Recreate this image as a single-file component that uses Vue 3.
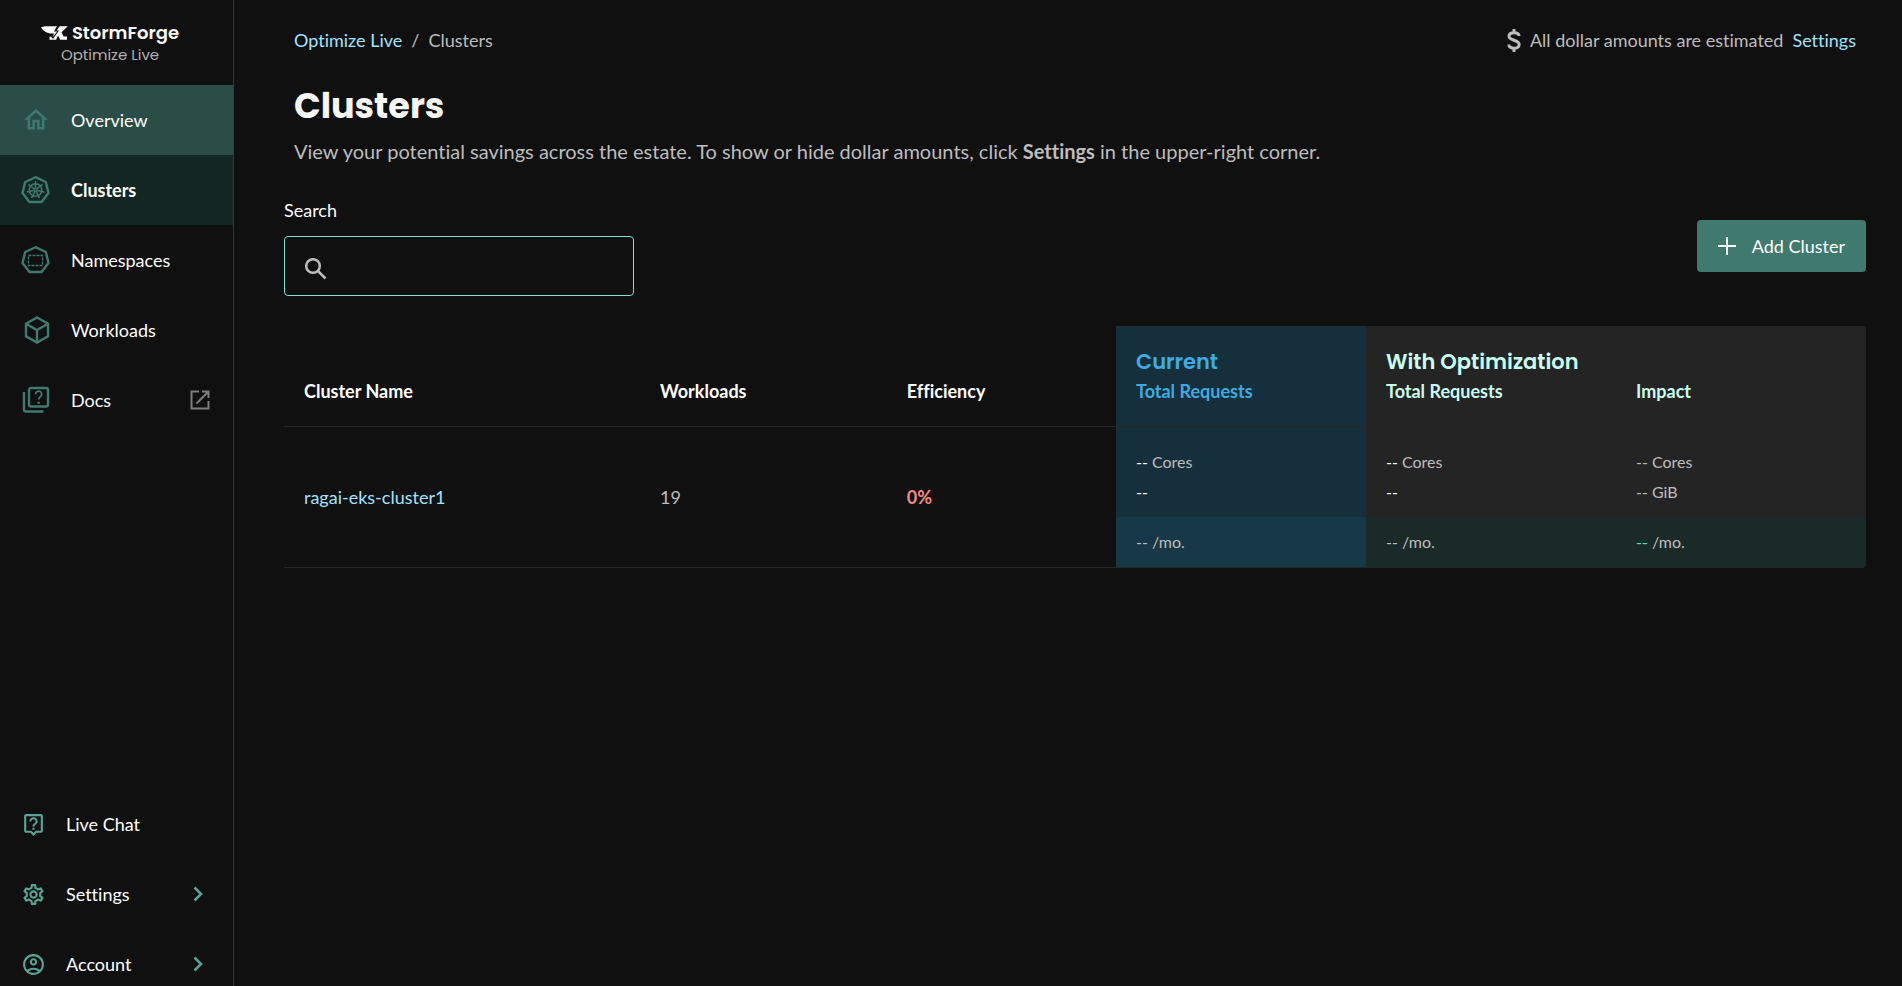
<script setup>
import { ref } from 'vue'

const search = ref('')

const navItems = [
  { label: 'Overview', icon: 'home', state: 'hovered' },
  { label: 'Clusters', icon: 'clusters', state: 'active' },
  { label: 'Namespaces', icon: 'namespaces', state: '' },
  { label: 'Workloads', icon: 'workloads', state: '' },
  { label: 'Docs', icon: 'docs', state: '', external: true },
]

const spokes = [0, 1, 2, 3, 4, 5, 6].map((i) => {
  const a = (i * 2 * Math.PI) / 7 - Math.PI / 2
  const dx = Math.cos(a)
  const dy = Math.sin(a)
  return { x1: 14.5 + 2 * dx, y1: 15 + 2 * dy, x2: 14.5 + 9 * dx, y2: 15 + 9 * dy }
})

const clusters = [{ name: 'ragai-eks-cluster1', workloads: 19, efficiency: '0%' }]
</script>

<template>
  <div class="app">
    <aside class="sidebar">
      <div class="brand">
        <div class="brand-name">
          <svg class="brand-mark" viewBox="0 0 27 14" aria-hidden="true">
            <path d="M0 1.200L4 .3H16L13 5.600H16.200L11.500 11.500L13 7.500H10.500C7 7.200 2.500 5.800 0 1.200z" />
            <path d="M18.600 .3H26.800L20.600 6.300L22.600 10.600H26V13.700H19.200L17 9.600L15.200 13.700H8.500V10.800H10.200L12 13L18 4.600H15.600z" />
          </svg>
          <span>StormForge</span>
        </div>
        <div class="brand-product">Optimize Live</div>
      </div>

      <nav class="nav" aria-label="Main">
        <a v-for="item in navItems" :key="item.label" href="#" class="nav-item" :class="item.state">
          <svg v-if="item.icon === 'home'" class="nav-icon" viewBox="0 0 30 30" aria-hidden="true">
            <path class="fill" d="M15 7.300l6 5.400V22h-2.400v-7.200h-7.200V22H9v-9.300l6-5.400M15 4L3 14.800h3.600v9.600h7.200v-7.200h2.400v7.200h7.200v-9.600H27L15 4z" />
          </svg>
          <svg v-else-if="item.icon === 'clusters'" class="nav-icon" viewBox="0 0 30 30" aria-hidden="true">
            <path class="line" d="M14.500 2.200L24.800 7L27.500 18L20.500 27H8.500L1.500 18L4.200 7z" />
            <g class="thin">
              <circle cx="14.500" cy="15" r="6.300" />
              <circle cx="14.500" cy="15" r="1.600" />
              <line v-for="(s, i) in spokes" :key="i" :x1="s.x1" :y1="s.y1" :x2="s.x2" :y2="s.y2" />
            </g>
          </svg>
          <svg v-else-if="item.icon === 'namespaces'" class="nav-icon" viewBox="0 0 30 30" aria-hidden="true">
            <path class="line" d="M14.500 2.200L24.800 7L27.500 18L20.500 27H8.500L1.500 18L4.200 7z" />
            <rect class="dash" x="7.500" y="10.500" width="14" height="10" />
          </svg>
          <svg v-else-if="item.icon === 'workloads'" class="nav-icon" viewBox="0 0 30 30" aria-hidden="true">
            <path class="line" d="M16 2.500L27 8.700V21.300L16 27.500L5 21.300V8.700zM5 8.700L16 15L27 8.700M16 15V27.500" />
          </svg>
          <svg v-else class="nav-icon" viewBox="0 0 30 30" aria-hidden="true">
            <rect class="line" x="8" y="3" width="19" height="18.500" rx="2" />
            <path class="line" d="M3 7V24.500A2 2 0 0 0 5 26.500H22.500" />
            <path class="question" d="M14.700 9.300A3 3 0 1 1 19.700 11.300C18.600 12.400 17.700 12.700 17.700 14.500" />
            <circle class="fill" cx="17.700" cy="17.700" r="1.300" />
          </svg>
          <span>{{ item.label }}</span>
          <svg v-if="item.external" class="external" viewBox="0 0 20 20" aria-hidden="true">
            <path d="M9 1.500H1.500V18.500H18.500V11M12 1.500H18.500V8M18.500 1.500L6.500 13.500" />
          </svg>
        </a>
      </nav>

      <nav class="nav nav-bottom" aria-label="Support and account">
        <a href="#" class="nav-item">
          <svg class="small-icon" viewBox="0 0 24 24" aria-hidden="true">
            <path d="M19 2H5c-1.110 0-2 .9-2 2v14c0 1.100.89 2 2 2h4l3 3 3-3h4c1.100 0 2-.9 2-2V4c0-1.100-.9-2-2-2zm0 16h-4.830l-.59.590L12 20.170l-1.590-1.590-.58-.580H5V4h14v14zm-8-3h2v2h-2zm1-8c1.100 0 2 .9 2 2 0 2-3 1.750-3 5h2c0-2.250 3-2.500 3-5 0-2.210-1.790-4-4-4s-4 1.790-4 4h2c0-1.100.9-2 2-2z" />
          </svg>
          <span>Live Chat</span>
        </a>
        <button type="button" class="nav-item">
          <svg class="small-icon" viewBox="0 0 24 24" aria-hidden="true">
            <path d="M19.430 12.980c.04-.32.07-.64.07-.98s-.03-.66-.07-.98l2.110-1.650c.19-.15.24-.42.12-.64l-2-3.460c-.09-.16-.26-.25-.44-.25-.06 0-.12.010-.17.030l-2.490 1c-.52-.4-1.080-.73-1.690-.98l-.38-2.650C14.460 2.180 14.250 2 14 2h-4c-.25 0-.46.18-.49.42l-.38 2.650c-.61.25-1.170.59-1.690.98l-2.490-1c-.06-.02-.12-.03-.18-.03-.17 0-.34.09-.43.25l-2 3.460c-.13.22-.07.49.12.64l2.110 1.650c-.04.32-.07.65-.07.980s.03.66.07.98l-2.110 1.650c-.19.15-.24.42-.12.64l2 3.460c.09.16.26.25.44.25.06 0 .12-.01.17-.03l2.490-1c.52.4 1.080.73 1.690.98l.38 2.650c.03.24.24.42.49.42h4c.25 0 .46-.18.49-.42l.38-2.650c.61-.25 1.170-.59 1.690-.98l2.490 1c.06.02.12.03.18.03.17 0 .34-.09.43-.25l2-3.460c.12-.22.07-.49-.12-.64l-2.110-1.650zm-1.980-1.710c.04.31.05.52.05.73 0 .21-.02.43-.05.73l-.14 1.130.89.7 1.080.84-.7 1.210-1.270-.51-1.040-.42-.9.68c-.43.32-.84.56-1.250.73l-1.060.43-.16 1.130-.2 1.350h-1.400l-.19-1.350-.16-1.130-1.060-.43c-.43-.18-.83-.41-1.230-.71l-.91-.7-1.060.43-1.270.51-.7-1.210 1.080-.84.89-.7-.14-1.130c-.03-.31-.05-.54-.05-.74s.02-.43.05-.73l.14-1.130-.89-.7-1.080-.84.7-1.210 1.270.51 1.040.42.9-.68c.43-.32.84-.56 1.250-.73l1.060-.43.16-1.130.2-1.350h1.390l.19 1.350.16 1.130 1.060.43c.43.18.83.41 1.230.71l.91.7 1.060-.43 1.270-.51.7 1.210-1.070.85-.89.7.14 1.130zM12 8c-2.210 0-4 1.790-4 4s1.790 4 4 4 4-1.790 4-4-1.790-4-4-4zm0 6c-1.100 0-2-.9-2-2s.9-2 2-2 2 .9 2 2-.9 2-2 2z" />
          </svg>
          <span>Settings</span>
          <svg class="chevron" viewBox="0 0 10 16" aria-hidden="true"><path d="M1.500 1.500L8 8L1.500 14.500" /></svg>
        </button>
        <button type="button" class="nav-item">
          <svg class="small-icon" viewBox="0 0 24 24" aria-hidden="true">
            <path d="M12 2C6.480 2 2 6.480 2 12s4.480 10 10 10 10-4.480 10-10S17.520 2 12 2zM7.350 18.500C8.660 17.560 10.260 17 12 17s3.340.56 4.650 1.500C15.340 19.440 13.740 20 12 20s-3.340-.56-4.650-1.500zm10.790-1.380C16.450 15.800 14.320 15 12 15s-4.450.8-6.140 2.120C4.700 15.730 4 13.950 4 12c0-4.420 3.580-8 8-8s8 3.580 8 8c0 1.950-.7 3.730-1.860 5.120zM12 6c-1.930 0-3.500 1.570-3.500 3.500S10.070 13 12 13s3.500-1.570 3.500-3.500S13.930 6 12 6zm0 5c-.83 0-1.500-.67-1.500-1.500S11.170 8 12 8s1.500.67 1.500 1.500S12.830 11 12 11z" />
          </svg>
          <span>Account</span>
          <svg class="chevron" viewBox="0 0 10 16" aria-hidden="true"><path d="M1.500 1.500L8 8L1.500 14.500" /></svg>
        </button>
      </nav>
    </aside>

    <main class="main">
      <header class="topbar">
        <nav class="crumbs" aria-label="Breadcrumb">
          <a href="#">Optimize Live</a>
          <span>/</span>
          <span>Clusters</span>
        </nav>
        <div class="estimate">
          <svg class="dollar" viewBox="0 0 14 23" aria-hidden="true">
            <path d="M12 7C12 4.700 9.800 3.700 7 3.700S2 5 2 7.300C2 12.200 12.200 10.200 12.200 15.500C12.200 18 9.800 19.300 7 19.300S1.800 18 1.800 15.500M7 0V4M7 19V23" />
          </svg>
          <span>All dollar amounts are estimated</span>
          <a href="#">Settings</a>
        </div>
      </header>

      <section class="intro">
        <h1>Clusters</h1>
        <p>
          View your potential savings across the estate. To show or hide dollar amounts, click
          <strong>Settings</strong> in the upper-right corner.
        </p>
      </section>

      <div class="toolbar">
        <div class="search">
          <label for="cluster-search">Search</label>
          <div class="search-box">
            <svg viewBox="0 0 22 22" aria-hidden="true">
              <circle cx="8" cy="8" r="6.800" />
              <path d="M13 13L20.500 20.500" />
            </svg>
            <input id="cluster-search" v-model="search" type="text" />
          </div>
        </div>
        <button type="button" class="add">
          <svg viewBox="0 0 18 18" aria-hidden="true"><path d="M9 0V18M0 9H18" /></svg>
          <span>Add Cluster</span>
        </button>
      </div>

      <table class="table">
        <colgroup>
          <col class="col-name" />
          <col class="col-workloads" />
          <col />
          <col class="col-metric" />
          <col class="col-metric" />
          <col class="col-metric" />
        </colgroup>
        <thead>
          <tr>
            <th scope="col">Cluster Name</th>
            <th scope="col">Workloads</th>
            <th scope="col">Efficiency</th>
            <th scope="col" class="current"><span class="group">Current</span>Total Requests</th>
            <th scope="col" class="optimized"><span class="group">With Optimization</span>Total Requests</th>
            <th scope="col" class="optimized last">Impact</th>
          </tr>
        </thead>
        <tbody>
          <tr v-for="cluster in clusters" :key="cluster.name">
            <td><a href="#">{{ cluster.name }}</a></td>
            <td>{{ cluster.workloads }}</td>
            <td class="efficiency">{{ cluster.efficiency }}</td>
            <td class="metric current">
              <div class="usage"><div><b>--</b> Cores</div><div><b>--</b></div></div>
              <div class="cost">-- /mo.</div>
            </td>
            <td class="metric optimized">
              <div class="usage"><div><b>--</b> Cores</div><div><b>--</b></div></div>
              <div class="cost">-- /mo.</div>
            </td>
            <td class="metric optimized last">
              <div class="usage"><div>-- Cores</div><div>-- GiB</div></div>
              <div class="cost"><i>--</i> /mo.</div>
            </td>
          </tr>
        </tbody>
      </table>
    </main>
  </div>
</template>

<style>
body {
  background: #101010;
}
</style>

<style scoped>
.app {
  display: flex;
  height: 100vh;
  overflow: hidden;
  background: #101010;
  color: #bdbdbd;
  font-family: Lato, "Open Sans", sans-serif;
  font-size: 18px;
  font-variant-ligatures: none;
  line-height: 24px;
}
.app *,
.app {
  box-sizing: border-box;
}
a {
  color: #a1e3ff;
  text-decoration: none;
}
button {
  margin: 0;
  border: 0;
  background: none;
  font: inherit;
  font-variant-ligatures: none;
  cursor: pointer;
}
svg {
  flex: none;
  display: block;
}

.sidebar {
  flex: none;
  display: flex;
  flex-direction: column;
  width: 234px;
  border-right: 1px solid #253f3a;
}
.brand {
  flex: none;
  display: flex;
  flex-direction: column;
  align-items: center;
  height: 85px;
  padding: 22px 13px 0 0;
  font-family: Poppins, Inter, sans-serif;
}
.brand-name {
  display: flex;
  align-items: center;
  gap: 4px;
  color: #fafafa;
  font-size: 18px;
  font-weight: 600;
  line-height: 22px;
}
.brand-mark {
  width: 27px;
  height: 14px;
  fill: #fafafa;
}
.brand-product {
  color: #b0b0b0;
  font-size: 15px;
  line-height: 22px;
}
.nav {
  display: flex;
  flex-direction: column;
}
.nav-item {
  flex: none;
  display: flex;
  align-items: center;
  gap: 20px;
  height: 70px;
  padding: 0 23px 0 21px;
  color: #fff;
  text-align: left;
}
.nav-item.hovered {
  background: #2b4d47;
}
.nav-item.active {
  background: #142623;
  font-weight: 700;
}
.nav-icon {
  width: 30px;
  height: 30px;
  fill: none;
}
.nav-icon .fill {
  fill: #3f7a6e;
}
.nav-icon .line {
  stroke: #3f7a6e;
  stroke-width: 2.400;
}
.nav-icon .thin {
  stroke: #3f7a6e;
  stroke-width: 1.500;
}
.nav-icon .dash {
  stroke: #3f7a6e;
  stroke-width: 1.300;
  stroke-dasharray: 3 1;
}
.nav-icon .question {
  stroke: #3f7a6e;
  stroke-width: 1.800;
}
.external {
  width: 20px;
  height: 20px;
  margin-left: auto;
  fill: none;
  stroke: #7d7d7d;
  stroke-width: 2;
}
.nav-bottom {
  margin: auto 0 -13px;
}
.nav-bottom .nav-item {
  padding-right: 30px;
}
.small-icon {
  width: 25px;
  height: 25px;
  fill: #57a595;
}
.chevron {
  width: 10px;
  height: 16px;
  margin-left: auto;
  fill: none;
  stroke: #57a595;
  stroke-width: 2.500;
}

.main {
  flex: 1;
  min-width: 0;
  padding: 28px 36px 0 50px;
}
.topbar {
  display: flex;
  justify-content: space-between;
  padding: 0 10px;
}
.crumbs,
.estimate {
  display: flex;
  align-items: center;
  gap: 9px;
}
.dollar {
  width: 14px;
  height: 23px;
  fill: none;
  stroke: #bdbdbd;
  stroke-width: 3;
}
.intro {
  padding: 29px 10px 0;
}
h1 {
  margin: 0;
  color: #f7f7f7;
  font-family: Poppins, Inter, sans-serif;
  font-size: 35px;
  font-weight: 700;
  line-height: 50px;
}
p {
  margin: 4px 0 0;
  font-size: 20px;
  line-height: 32px;
}
.toolbar {
  display: flex;
  justify-content: space-between;
  align-items: flex-end;
  margin-top: 31px;
}
label {
  display: block;
  margin-bottom: 14px;
  color: #fff;
}
.search-box {
  display: flex;
  align-items: center;
  gap: 12px;
  width: 350px;
  height: 60px;
  padding: 5px 16px 0 20px;
  border: 1px solid #7fe0cc;
  border-radius: 4px;
}
.search-box svg {
  width: 22px;
  height: 22px;
  fill: none;
  stroke: #bdbdbd;
  stroke-width: 2.500;
}
.search-box input {
  flex: 1;
  min-width: 0;
  height: 40px;
  padding: 0;
  border: 0;
  outline: 0;
  background: transparent;
  color: #fff;
  font: inherit;
}
.add {
  display: flex;
  align-items: center;
  gap: 16px;
  height: 52px;
  margin-bottom: 24px;
  padding: 0 21px;
  border-radius: 4px;
  background: #40796e;
  color: #fff;
}
.add svg {
  width: 18px;
  height: 18px;
  stroke: #fff;
  stroke-width: 2;
}

.table {
  width: 100%;
  margin-top: 30px;
  border-collapse: separate;
  border-spacing: 0;
  table-layout: fixed;
}
.col-name {
  width: 22.5%;
}
.col-workloads {
  width: 15.6%;
}
.col-metric {
  width: 250px;
}
th,
td {
  padding: 0 20px;
  border-bottom: 1px solid #262626;
  text-align: left;
}
th {
  height: 101px;
  padding-bottom: 23px;
  color: #fff;
  font-weight: 700;
  vertical-align: bottom;
}
.group {
  display: block;
  font-family: Poppins, Inter, sans-serif;
  font-size: 21px;
  font-weight: 600;
  line-height: 34px;
  white-space: nowrap;
}
.current {
  background: #15303c;
}
th.current {
  color: #3fabe0;
}
.optimized {
  background: #242424;
}
th.optimized {
  color: #c8fff2;
}
th.last {
  border-top-right-radius: 4px;
}
td.last {
  border-bottom-right-radius: 4px;
  overflow: hidden;
}
.efficiency {
  color: #f88983;
  font-weight: 700;
}
.metric {
  padding: 0;
  font-size: 16px;
}
.usage {
  padding: 20px 20px 10px;
  line-height: 30px;
}
.usage b {
  color: #fff;
  font-weight: 400;
}
.cost {
  padding: 0 20px;
  line-height: 50px;
}
.cost i {
  color: #3fe8a8;
  font-style: normal;
}
.current .cost {
  background: #173947;
}
.optimized .cost {
  background: #1a2a28;
}
</style>
